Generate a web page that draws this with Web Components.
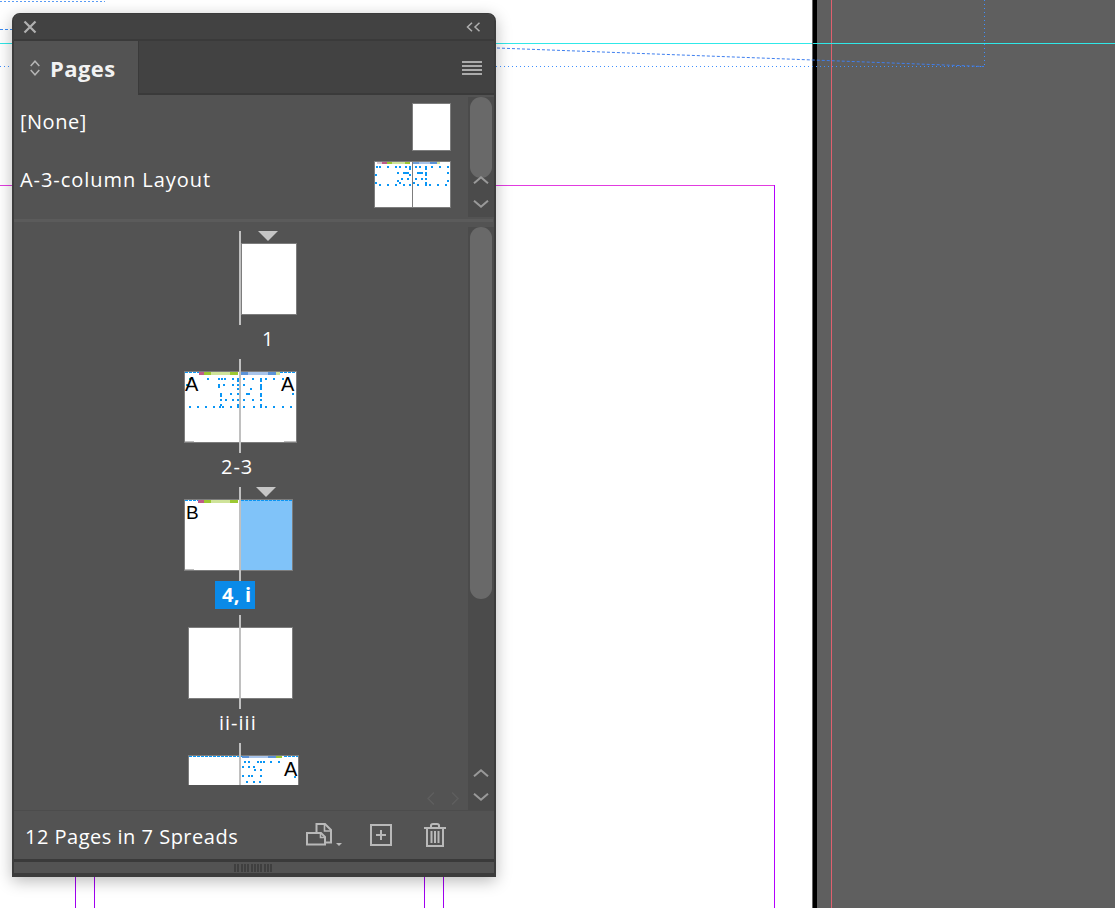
<!DOCTYPE html>
<html>
<head>
<meta charset="utf-8">
<title>Pages</title>
<style>
  html, body { margin: 0; height: 100%; overflow: hidden; background: #fff; }
  body { position: relative; width: 1115px; height: 908px; font-family: "Open Sans", "Noto Sans", sans-serif; }
</style>
</head>
<body>
<doc-canvas></doc-canvas>
<pages-panel>
  <master-row label="[None]"><page-thumb w="39" h="48"></page-thumb></master-row>
  <master-row label="A-3-column Layout" wide><page-thumb w="77" h="47" art="master"></page-thumb></master-row>

  <page-spread slot="spreads" label="1" label-left="248" indent="227" marker="244"><page-thumb w="56" h="72"></page-thumb></page-spread>
  <page-spread slot="spreads" label="2-3" label-left="207" indent="170"><page-thumb w="113" h="72" art="spread-a"></page-thumb></page-spread>
  <page-spread slot="spreads" label="4, i" label-left="201" indent="170" marker="242" selected><page-thumb w="109" h="72" art="spread-b"></page-thumb></page-spread>
  <page-spread slot="spreads" label="ii-iii" label-left="205" indent="174"><page-thumb w="105" h="72"></page-thumb></page-spread>
  <page-spread slot="spreads" indent="174"><page-thumb w="111" h="72" art="spread-c"></page-thumb></page-spread>

  <span slot="status">12 Pages in 7 Spreads</span>
</pages-panel>

<script>
// blue frame markers inside the page thumbnails
function dotRow(y, xs) {
  return xs.map(x => `<rect x="${x}" y="${y}" width="2" height="2" fill="#0a96f5"/>`).join('');
}
function dashes(y, from, to) {
  let out = '';
  for (let x = from; x < to; x += 4) out += `<rect x="${x}" y="${y}" width="2.5" height="1" fill="#0a96f5"/>`;
  return out;
}
function strip(y, h, parts) {
  return parts.map(p => `<rect x="${p[0]}" y="${y}" width="${p[1] - p[0]}" height="${h}" fill="${p[2]}"/>`).join('');
}
function letter(x, y, ch, size) {
  return `<text x="${x}" y="${y}" font-family="Liberation Sans, sans-serif" font-size="${size || 20}" fill="#000">${ch}</text>`;
}

const ART = {
  master:
    strip(1, 2, [[3, 8, '#d8c8d0'], [8, 13, '#c05a88'], [13, 18, '#9cc832'], [18, 31, '#cfe39a'], [31, 36, '#9cc832'], [39, 45, '#6f9fd8'], [45, 56, '#a8c4ea'], [56, 63, '#5b93d8'], [63, 66, '#cfe39a']]) +
    dotRow(5, [2, 5, 13, 21, 25, 31, 35, 41, 45, 51, 57, 65, 73]) +
    dotRow(7, [35, 51]) +
    dotRow(11, [23, 29, 31, 33, 43, 45, 47, 51, 73]) +
    dotRow(13, [1, 35, 51]) +
    dotRow(17, [27, 33, 41, 47, 51]) +
    dotRow(19, [23, 73]) +
    dotRow(21, [1, 25, 39, 51]) +
    dotRow(23, [5, 13, 21, 29, 35, 43, 51, 55, 63, 71]) +
    `<rect x="37.500" y="0" width="1.500" height="47" fill="#7d7d7d"/>`,

  'spread-a':
    dashes(1, 1, 15) + dashes(1, 96, 112) +
    strip(1, 3, [[15, 20, '#c05a88'], [20, 27, '#9cc832'], [27, 46, '#cfe39a'], [46, 54, '#9cc832'], [57, 64, '#5b93d8'], [64, 84, '#a8c4ea'], [84, 92, '#5b93d8'], [92, 96, '#cfe39a']]) +
    dotRow(7, [5, 23, 34, 37, 40, 48, 53, 59, 68, 76, 81, 89, 98]) +
    dotRow(9, [53, 76]) +
    dotRow(13, [2, 34, 39, 48, 53, 59, 76]) +
    dotRow(15, [34, 76]) +
    dotRow(17, [53, 66, 76]) +
    dotRow(22, [36, 46, 53, 62, 64, 76, 108]) +
    dotRow(24, [36, 76]) +
    dotRow(28, [36, 41, 48, 53, 59, 68, 76]) +
    dotRow(33, [36, 53, 76]) +
    dotRow(35, [5, 13, 21, 29, 35, 38, 46, 53, 59, 69, 76, 81, 89, 98, 106]) +
    letter(1, 20, 'A') + letter(97, 20, 'A') +
    strip(70, 1, [[1, 10, '#bdbdbd'], [100, 112, '#bdbdbd']]),

  'spread-b':
    `<rect x="56" y="0" width="53" height="72" fill="#80c3f9"/>` +
    dashes(1, 1, 14) + dashes(1, 57, 108) +
    strip(1, 3, [[14, 20, '#c05a88'], [20, 27, '#9cc832'], [27, 46, '#cfe39a'], [46, 54, '#9cc832']]) +
    letter(2, 20, 'B', 19) +
    strip(70, 1, [[1, 10, '#bdbdbd']]),

  'spread-c':
    dashes(1, 1, 54) + dashes(1, 96, 110) +
    strip(0, 3, [[54, 61, '#5b93d8'], [61, 80, '#a8c4ea'], [80, 88, '#5b93d8'], [88, 94, '#9cc832']]) +
    dotRow(6, [56, 60, 69, 72, 75, 82, 90]) +
    dotRow(11, [54, 60, 65]) +
    dotRow(14, [66, 72]) +
    dotRow(20, [54, 60, 63, 72]) +
    dotRow(21, [106]) +
    dotRow(26, [58, 65, 71]) +
    letter(96, 21, 'A')
};

class DocCanvas extends HTMLElement {
  constructor() {
    super();
    const shadow = this.attachShadow({ mode: 'open' });
    shadow.innerHTML = `
      <style>
        :host { position: absolute; left: 0; top: 0; width: 1115px; height: 908px; display: block; }
        svg { display: block; }
      </style>
      <svg width="1115" height="908" shape-rendering="crispEdges">
        <rect x="813" width="302" height="908" fill="#5f5f5f"/>
        <rect x="812" width="1" height="908" fill="#666"/>
        <rect x="813" width="4" height="908" fill="#000"/>
        <rect y="185" width="775" height="1" fill="#e23be0"/>
        <rect x="774" y="185" width="1" height="723" fill="#b400ff"/>
        <rect x="75" y="870" width="1" height="38" fill="#a000f0"/>
        <rect x="94" y="870" width="1" height="38" fill="#a000f0"/>
        <rect x="424" y="870" width="1" height="38" fill="#a000f0"/>
        <rect x="443" y="870" width="1" height="38" fill="#a000f0"/>
        <rect x="831" width="1" height="908" fill="#e0606e"/>
        <rect y="43" width="812" height="1" fill="#30e8e8"/>
        <rect x="813" y="43" width="302" height="1" fill="#30e8e8"/>
        <path d="M0 1.500H105" stroke="#5a9cf5" stroke-dasharray="2 2"/>
        <path d="M0 29.500H12" stroke="#3a8cf5" stroke-dasharray="3 2"/>
        <path d="M0 66.500H984" stroke="#3f8fff" stroke-dasharray="1 3"/>
        <path d="M984.500 0V66" stroke="#3f8fff" stroke-dasharray="1 3"/>
        <path d="M497 48L984 66.500" stroke="#3f7fef" stroke-width="1" stroke-dasharray="3 2" shape-rendering="auto" fill="none"/>
      </svg>`;
  }
}
customElements.define('doc-canvas', DocCanvas);

class PageThumb extends HTMLElement {
  constructor() {
    super();
    const w = this.getAttribute('w');
    const h = this.getAttribute('h');
    const art = ART[this.getAttribute('art')] || '';
    const shadow = this.attachShadow({ mode: 'open' });
    shadow.innerHTML = `
      <style>
        :host { display: block; box-sizing: border-box; width: ${w}px; height: ${h}px; background: #fff; position: relative; overflow: hidden; flex: none; }
        svg { position: absolute; left: 0; top: 0; }
        i { position: absolute; inset: 0; box-shadow: 0 0 0 1px #7d7d7d inset; }
      </style>
      <svg width="${w}" height="${h}" shape-rendering="crispEdges">${art}</svg>
      <i></i>`;
  }
}
customElements.define('page-thumb', PageThumb);

class MasterRow extends HTMLElement {
  constructor() {
    super();
    const label = this.getAttribute('label');
    const shadow = this.attachShadow({ mode: 'open' });
    shadow.innerHTML = `
      <style>
        :host { display: flex; align-items: flex-start; justify-content: space-between; height: 58px; padding: 0 17px 0 6px; color: #fff; font-size: 20px; font-weight: 500; letter-spacing: .5px; }
        :host([wide]) { letter-spacing: .95px; }
        span { line-height: 54px; }
        ::slotted(page-thumb) { margin-top: 8px; }
      </style>
      <span>${label}</span>
      <slot></slot>`;
  }
}
customElements.define('master-row', MasterRow);

class ScrollRail extends HTMLElement {
  constructor() {
    super();
    const thumb = this.getAttribute('thumb');
    const shadow = this.attachShadow({ mode: 'open' });
    shadow.innerHTML = `
      <style>
        :host { display: block; position: relative; width: 26px; background: #4b4b4b; flex: none; }
        .thumb { margin: 0 2px; height: ${thumb}px; border-radius: 11px; background: #696969; }
        .arrows { position: absolute; left: 5px; bottom: 9px; display: flex; flex-direction: column; gap: 16px; }
        svg { display: block; }
      </style>
      <div class="thumb"></div>
      <div class="arrows">
        <svg width="16" height="8" viewBox="0 0 16 8"><path d="M1 7.300L8 1.300L15 7.300" fill="none" stroke="#999" stroke-width="2"/></svg>
        <svg width="16" height="8" viewBox="0 0 16 8"><path d="M1 .7L8 6.700L15 .7" fill="none" stroke="#999" stroke-width="2"/></svg>
      </div>`;
  }
}
customElements.define('scroll-rail', ScrollRail);

class PageSpread extends HTMLElement {
  constructor() {
    super();
    const label = this.getAttribute('label');
    const marker = this.getAttribute('marker');
    const indent = this.getAttribute('indent') || 0;
    const labelLeft = this.getAttribute('label-left') || 0;
    const shadow = this.attachShadow({ mode: 'open' });
    shadow.innerHTML = `
      <style>
        :host { display: block; position: relative; height: 128px; flex: none; }
        .marker { height: 12px; }
        .marker i { display: block; width: 0; height: 0; margin-left: ${marker}px; border: 10px solid transparent; border-top-color: #c6c6c6; border-bottom: 0; }
        .thumb { margin-left: ${indent}px; height: 72px; }
        .label { margin: 10px 0 0 ${labelLeft}px; height: 28px; line-height: 28px; font-size: 20px; font-weight: 500; letter-spacing: 1px; color: #fff; }
        .label span { display: inline-block; }
        :host([selected]) .label span { background: #0a8ae8; color: #fff; font-weight: 700; padding: 0 0 0 7px; width: 33px; letter-spacing: .2px; white-space: nowrap; }
        .spine { position: absolute; left: 225px; top: 0; width: 2px; height: 94px; background: #c0c0c0; }
      </style>
      <div class="marker">${marker ? '<i></i>' : ''}</div>
      <div class="thumb"><slot></slot></div>
      ${label ? `<div class="label"><span>${label}</span></div>` : ''}
      <div class="spine"></div>`;
  }
}
customElements.define('page-spread', PageSpread);

class PagesPanel extends HTMLElement {
  constructor() {
    super();
    const shadow = this.attachShadow({ mode: 'open' });
    shadow.innerHTML = `
      <style>
        :host {
          position: absolute; left: 12px; top: 13px; width: 484px; height: 864px; box-sizing: border-box;
          display: flex; flex-direction: column;
          background: #535353; border: solid #3c3c3c; border-width: 1px 2px 4px 2px; border-radius: 8px 8px 0 0;
          box-shadow: 0 4px 16px rgba(0,0,0,.28); color: #fff;
          font-family: "Open Sans", "Noto Sans", sans-serif;
        }
        svg { display: block; }
        .title { height: 25px; background: #424242; border-radius: 7px 7px 0 0; display: flex; align-items: center; justify-content: space-between; padding: 0 13px 0 9px; flex: none; }
        .rule { height: 2px; background: #3a3a3a; flex: none; }
        .tabs { height: 54px; display: flex; background: #424242; box-shadow: 0 -2px 0 #3a3a3a inset; flex: none; }
        .tab { width: 124px; height: 54px; box-sizing: border-box; background: #535353; display: flex; align-items: center; gap: 10px; padding: 0 0 0 16px; font-size: 22px; letter-spacing: .4px; font-weight: 700; color: #f2f2f2; }
        .edge { width: 1px; background: #3a3a3a; }
        .menu { margin: 20px 12px 0 auto; }
        .masters { height: 124px; display: flex; flex: none; }
        .master-list { flex: 1; }
        .masters scroll-rail { height: 120px; margin-top: 2px; }
        .divider { height: 3px; background: #5b5b5b; flex: none; margin-right: 1px; }
        .pages { height: 588px; display: flex; flex: none; }
        .pages-left { flex: 1; display: flex; flex-direction: column; min-width: 0; }
        .viewport { height: 563px; padding-top: 9px; box-sizing: border-box; overflow: hidden; flex: none; }
        .hscroll { flex: 1; display: flex; align-items: center; justify-content: flex-end; gap: 16px; padding: 2px 9px 0 0; }
        .pages scroll-rail { height: 583px; margin-top: 5px; }
        .footer { height: 49px; box-sizing: border-box; border-top: 1px solid #4c4c4c; display: flex; align-items: center; padding: 0 48px 0 11px; font-size: 20px; font-weight: 500; letter-spacing: .5px; flex: none; }
        .status { padding-top: 2px; }
        .tools { margin-left: auto; display: flex; align-items: center; margin-top: -1px; }
        .strip { height: 3px; background: #3a3a3a; flex: none; }
        .grip { height: 11px; display: flex; justify-content: center; align-items: center; flex: none; }
        .grip i { width: 40px; height: 8px; background: repeating-linear-gradient(90deg, #3f3f3f 0 2px, transparent 2px 3.3px); }
      </style>
      <div class="title">
        <svg width="14" height="14" viewBox="0 0 14 14"><path d="M1.500 1.500L12.500 12.500M12.500 1.500L1.500 12.500" stroke="#b0b0b0" stroke-width="2.200"/></svg>
        <svg width="15" height="10" viewBox="0 0 15 10"><path d="M6 0.700L1.500 5L6 9.300M13.500 0.700L9 5L13.500 9.300" fill="none" stroke="#b0b0b0" stroke-width="1.500"/></svg>
      </div>
      <div class="rule"></div>
      <div class="tabs">
        <div class="tab">
          <svg width="10" height="16" viewBox="0 0 10 16"><path d="M0.700 6L5 1.200L9.300 6M0.700 10L5 14.800L9.300 10" fill="none" stroke="#b5b5b5" stroke-width="1.500"/></svg>
          <span>Pages</span>
        </div>
        <div class="edge"></div>
        <svg class="menu" width="20" height="14" viewBox="0 0 20 14" shape-rendering="crispEdges"><path d="M0 1H20M0 5H20M0 9H20M0 13H20" stroke="#ababab" stroke-width="2"/></svg>
      </div>
      <div class="masters">
        <div class="master-list"><slot></slot></div>
        <scroll-rail thumb="81"></scroll-rail>
      </div>
      <div class="divider"></div>
      <div class="pages">
        <div class="pages-left">
          <div class="viewport"><slot name="spreads"></slot></div>
          <div class="hscroll">
            <svg width="8" height="13" viewBox="0 0 8 13"><path d="M7 .5L1 6.500L7 12.500" fill="none" stroke="#5e5e5e" stroke-width="1.500"/></svg>
            <svg width="8" height="13" viewBox="0 0 8 13"><path d="M1 .5L7 6.500L1 12.500" fill="none" stroke="#5e5e5e" stroke-width="1.500"/></svg>
          </div>
        </div>
        <scroll-rail thumb="372"></scroll-rail>
      </div>
      <div class="footer">
        <div class="status"><slot name="status"></slot></div>
        <div class="tools">
          <svg width="37" height="24" viewBox="0 0 37 24">
            <path d="M10.500 9V1H19L25 7V19.500H20" fill="none" stroke="#b9b9b9" stroke-width="2"/>
            <path d="M18.500 1V8H25" fill="none" stroke="#b9b9b9" stroke-width="1.600"/>
            <path d="M1 10H15L19 14V21.500H1Z" fill="#535353" stroke="#b9b9b9" stroke-width="2"/>
            <path d="M14.500 10.500V14.500H19" fill="none" stroke="#b9b9b9" stroke-width="1.600"/>
            <path d="M30 20H36L33 23Z" fill="#b9b9b9"/>
          </svg>
          <svg style="margin-left:27px" width="22" height="22" viewBox="0 0 22 22">
            <rect x="1" y="1" width="20" height="20" fill="none" stroke="#b9b9b9" stroke-width="2"/>
            <path d="M6 11H16M11 6V16" stroke="#b9b9b9" stroke-width="2"/>
          </svg>
          <svg style="margin-left:32px" width="22" height="24" viewBox="0 0 22 24">
            <path d="M0 5H22" stroke="#b9b9b9" stroke-width="2"/>
            <path d="M7 5V2.500Q7 1 9 1H13Q15 1 15 2.500V5" fill="none" stroke="#b9b9b9" stroke-width="2"/>
            <path d="M3 5V23H19V5" fill="none" stroke="#b9b9b9" stroke-width="2"/>
            <path d="M7.500 8V20M11 8V20M14.500 8V20" stroke="#b9b9b9" stroke-width="2"/>
          </svg>
        </div>
      </div>
      <div class="strip"></div>
      <div class="grip"><i></i></div>`;
  }
}
customElements.define('pages-panel', PagesPanel);
</script>
</body>
</html>
